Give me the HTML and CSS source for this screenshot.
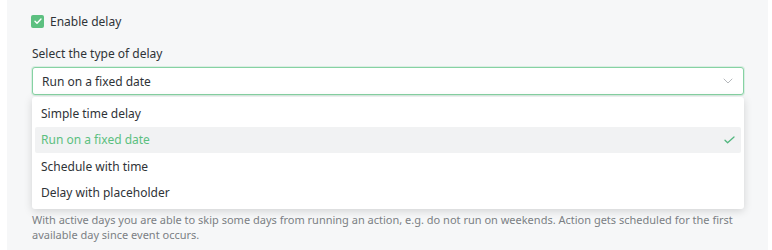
FILE: index.html
```html
<!DOCTYPE html>
<html lang="en">
<head>
  <meta charset="UTF-8" />
  <title>Delay settings</title>
  <link rel="stylesheet" href="styles.css">
</head>
<body>
  <div class="panel">
    <label class="check-row">
      <span class="checkbox">
        <svg width="10" height="10" viewBox="0 0 10 10" fill="none" stroke="#fff" stroke-width="1.4" stroke-linecap="round" stroke-linejoin="round">
          <path d="M2 5.2l2 2 4-4.2" />
        </svg>
      </span>
      Enable delay
    </label>

    <div class="field-label">Select the type of delay</div>

    <div class="select-wrap">
      <div class="select">
        <span>Run on a fixed date</span>
        <svg width="10" height="6" viewBox="0 0 10 6" fill="none" stroke="#b5b8bc" stroke-width="1" stroke-linecap="round">
          <path d="M1 1l4 4 4-4" />
        </svg>
      </div>

      <ul class="menu">
        <li>Simple time delay</li>
        <li class="active">
          Run on a fixed date
          <svg width="11" height="8" viewBox="0 0 11 8" fill="none" stroke="#52b77f" stroke-width="1.3" stroke-linecap="round" stroke-linejoin="round">
            <path d="M1 4.2l2.6 2.6L10 1" />
          </svg>
        </li>
        <li>Schedule with time</li>
        <li>Delay with placeholder</li>
      </ul>
    </div>

    <p class="help">With active days you are able to skip some days from running an action, e.g. do not run on weekends. Action gets scheduled for the first available day since event occurs.</p>
  </div>
</body>
</html>
```

FILE: styles.css
```css
body {
  margin: 0;
  background-color: #ffffff;
  font-family: "Noto Sans", "Open Sans", sans-serif;
  font-size: 12px;
  color: #2f3337;
}

.panel {
  margin: 0 4px 0 7px;
  height: 250px;
  background-color: #f6f7f8;
  padding: 12px 24px 0 25px;
  box-sizing: border-box;
}

.check-row {
  display: flex;
  align-items: center;
  gap: 6px;
  height: 18px;
  margin-left: -1px;
}

.checkbox {
  width: 13px;
  height: 13px;
  border-radius: 2px;
  background-color: #5cc080;
  display: flex;
  align-items: center;
  justify-content: center;
}

.field-label {
  margin-top: 16px;
  line-height: 16px;
}

.select-wrap {
  position: relative;
  margin-top: 5px;
}

.select {
  height: 26px;
  border: 1px solid #86d2a3;
  border-radius: 3px;
  background-color: #fff;
  box-shadow: 0 0 0 1px rgba(134, 210, 163, 0.25);
  display: flex;
  align-items: center;
  justify-content: space-between;
  padding: 0 10px 0 9px;
}

.menu {
  position: absolute;
  left: 0;
  right: 0;
  top: 30px;
  margin: 0;
  padding: 3px;
  list-style: none;
  background-color: #fff;
  border-radius: 3px;
  box-shadow: 0 2px 8px rgba(0, 0, 0, 0.15);
}

.menu li {
  height: 26.5px;
  display: flex;
  align-items: center;
  justify-content: space-between;
  padding: 0 6px;
  border-radius: 2px;
}

.menu li.active {
  background-color: #f1f2f3;
  color: #5cc080;
}

.help {
  margin: 117px 0 0;
  color: #7b7f84;
  line-height: 15px;
  font-size: 11px;
}
```
